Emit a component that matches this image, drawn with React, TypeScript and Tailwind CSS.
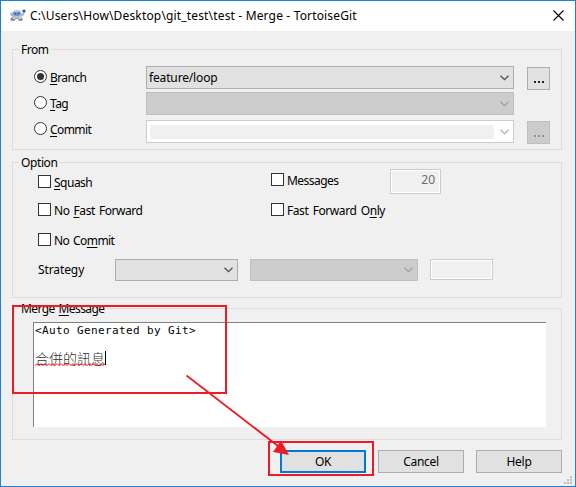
import type { ReactNode } from "react";

function Group({ title, titleClass, className, children }: { title: ReactNode; titleClass: string; className: string; children: ReactNode }) {
  return (
    <section className={`flex w-[550px] flex-col border border-[#dcdcdc] ${className}`}>
      <h2 className={`-mt-[8px] ml-[6px] h-[15px] shrink-0 self-start whitespace-nowrap bg-[#f0f0f0] pl-[2px] font-normal ${titleClass}`}>{title}</h2>
      {children}
    </section>
  );
}

function Key({ children }: { children: string }) {
  return <span className="underline decoration-1 underline-offset-2">{children}</span>;
}

function Radio({ checked, className, children }: { checked?: boolean; className: string; children: ReactNode }) {
  return (
    <label className={`flex h-4 w-[112px] shrink-0 whitespace-nowrap ${className}`}>
      <span className="mt-px mr-[3px] flex size-[13px] shrink-0 items-center justify-center rounded-full border border-[#333] bg-white">
        {checked && <span className="size-[7px] rounded-full bg-[#333]" />}
      </span>
      <span className="mt-px tracking-[-0.6px]">{children}</span>
    </label>
  );
}

function Check({ className, children }: { className: string; children: ReactNode }) {
  return (
    <label className={`flex h-4 shrink-0 whitespace-nowrap ${className}`}>
      <span className="mt-px mr-[3px] size-[13px] shrink-0 border border-[#333] bg-white" />
      <span className="mt-px">{children}</span>
    </label>
  );
}

function Chevron({ color }: { color: string }) {
  return (
    <svg width="9" height="6" viewBox="0 0 9 6" fill="none" stroke={color} strokeWidth="1.3" className="mr-1 shrink-0">
      <path d="M.5 .7 4.5 4.7 8.5 .7" />
    </svg>
  );
}

function Combo({ className, disabled, children }: { className: string; disabled?: boolean; children?: ReactNode }) {
  return (
    <div className={`flex shrink-0 items-center justify-between border ${disabled ? "border-[#bfbfbf] bg-[#ccc]" : "border-[#adadad] bg-[#e1e1e1]"} ${className}`}>
      <span className="pl-[2px] tracking-[-0.15px]">{children}</span>
      <Chevron color={disabled ? "#a0a0a0" : "#505050"} />
    </div>
  );
}

function Browse({ className, disabled }: { className?: string; disabled?: boolean }) {
  return (
    <button className={`ml-[13px] flex h-[23px] w-[23px] shrink-0 items-end justify-center gap-[2px] border pb-[6px] ${disabled ? "border-[#bfbfbf] bg-[#ccc] text-[#929292]" : "border-[#adadad] bg-[#e1e1e1] text-[#202030]"} ${className ?? ""}`}>
      <span className="size-[2px] bg-current" />
      <span className="size-[2px] bg-current" />
      <span className="size-[2px] bg-current" />
    </button>
  );
}

function Tortoise() {
  return (
    <svg width="17" height="15" viewBox="0 0 17 15" className="mt-[6px] ml-2 shrink-0">
      <path d="M1 5.5 4 6l1 4-3-1Z" fill="#a9adb8" />
      <path d="M11 7l3-1 1-3 1 1-1 4-3 2Z" fill="#b2b7c4" />
      <path d="M3 10l3-1 5 0 3 3-1 2h-3l-1-2-2 0-2 2H2l-1-2Z" fill="#9a9ca6" />
      <path d="M4 10.500h2v2H4ZM10 10.500h2v2h-2Z" fill="#e1e1e4" />
      <ellipse cx="7.800" cy="7" rx="4.600" ry="4" fill="#b4c4e6" />
      <path d="M4 5.500Q7.500 1.500 11.500 5v3Q8 10 4 8Z" fill="#7890c4" />
      <path d="M5 4.500Q8 2 10.500 4.500L9 5H6Z" fill="#c0d2f5" />
      <path d="M6 6h1v1.500H6ZM9 6h1v1.500H9Z" fill="#3b5088" />
      <circle cx="15" cy="4" r="1.600" fill="#285b76" />
      <path d="M3 12.500h3M10 12.500h3" stroke="#777b88" />
    </svg>
  );
}

const squiggle = Array.from({ length: 36 }, (_, i) => `${i * 2},${i % 2 ? 0.7 : 2.5}`).join(" ");

export default function App() {
  return (
    <div className="relative flex h-[487px] w-[576px] flex-col overflow-hidden border border-[#1883d7] bg-[#f0f0f0] font-['Noto_Sans','Noto_Sans_CJK_TC',sans-serif] text-[12px] leading-4 text-black">
      <header className="flex h-[30px] shrink-0 bg-white">
        <Tortoise />
        <h1 className="mt-[7px] ml-1 w-[523px] text-[12px] font-normal tracking-[0.16px] whitespace-nowrap">C:\Users\How\Desktop\git_test\test - Merge - TortoiseGit</h1>
        <svg width="11" height="11" viewBox="0 0 11 11" stroke="#000" strokeWidth="1.1" className="mt-[9px] shrink-0">
          <path d="M.5 .5l10 10M10.500 .5l-10 10" />
        </svg>
      </header>

      <main className="flex flex-col pl-[11px]">
        <Group title="From" titleClass="w-[31px] tracking-[-0.5px]" className="mt-[18px] h-[101px]">
          <div className="mt-[9px] flex h-[23px] pl-[21px]">
            <Radio checked className="mt-[3px]"><Key>B</Key>ranch</Radio>
            <Combo className="h-[23px] w-[368px]">feature/loop</Combo>
            <Browse className="mt-px" />
          </div>
          <div className="mt-[3px] flex h-[23px] pl-[21px]">
            <Radio className="mt-[3px]"><Key>T</Key>ag</Radio>
            <Combo disabled className="h-[23px] w-[368px]" />
          </div>
          <div className="mt-[5px] flex h-[23px] pl-[21px]">
            <Radio className="mt-px"><Key>C</Key>ommit</Radio>
            <div className="flex h-[23px] w-[368px] shrink-0 items-center justify-between border border-[#ccc] bg-white pl-[3px]">
              <span className="h-[14px] w-[344px] bg-[#f0f0f0]" />
              <Chevron color="#b0b0b0" />
            </div>
            <Browse disabled className="mt-px" />
          </div>
        </Group>

        <Group title="Option" titleClass="w-[41px] tracking-[-0.4px]" className="mt-3 h-[136px]">
          <div className="flex h-[89px] shrink-0 pl-[25px]">
            <div className="flex w-[233px] flex-col pt-1">
              <Check className="tracking-[-0.5px]"><Key>S</Key>quash</Check>
              <Check className="mt-3 tracking-[-0.45px] [word-spacing:1.4px]">No <Key>F</Key>ast Forward</Check>
              <Check className="mt-[14px] tracking-[-0.6px] [word-spacing:1.4px]">No Co<Key>m</Key>mit</Check>
            </div>
            <div className="flex flex-col">
              <div className="-mt-px flex h-[25px]">
                <Check className="mt-[3px] w-[119px] tracking-[-0.55px]">Messages</Check>
                <div className="h-[25px] w-[51px] border border-[#ccc] bg-[#f0f0f0] pt-[2px] pr-[5px] text-right text-[#6d6d6d] ring-1 ring-white ring-inset">20</div>
              </div>
              <Check className="mt-2 tracking-[-0.42px] [word-spacing:1.6px]">Fast Forward O<Key>n</Key>ly</Check>
            </div>
          </div>
          <div className="flex pl-[25px]">
            <span className="mt-[3px] w-[77px] shrink-0 tracking-[-0.1px]">Strategy</span>
            <Combo className="h-[22px] w-[123px]" />
            <Combo disabled className="ml-3 h-[22px] w-[168px]" />
            <div className="ml-3 h-[21px] w-[63px] border border-[#ccc] ring-1 ring-white ring-inset" />
          </div>
        </Group>

        <Group title={<span>Merge <Key>M</Key>essage</span>} titleClass="w-[88px] tracking-[-0.6px] [word-spacing:1.4px]" className="mt-[10px] h-[132px]">
          <div className="mt-[6px] ml-5 flex h-[105px] w-[513px] flex-col border-t border-l border-[#828282] bg-white pl-px">
            <p className="h-[28px] whitespace-pre font-['DejaVu_Sans_Mono',monospace] text-[11px] tracking-[0.378px]">{"<Auto Generated by Git>"}</p>
            <div className="flex h-4">
              <span className="relative -mt-[1px] h-4 font-['Noto_Sans_CJK_TC',sans-serif] text-[14px] font-light text-[#333]">
                合併的訊息
                <svg width="70" height="3" viewBox="0 0 70 3" fill="none" stroke="#f00" strokeWidth="0.9" className="absolute top-[13px] left-0">
                  <polyline points={squiggle} />
                </svg>
              </span>
              <span className="h-[14px] w-px bg-black" />
            </div>
          </div>
        </Group>
      </main>

      <footer className="mt-[10px] flex gap-3 pl-[279px]">
        <button className="h-[23px] w-[86px] border-2 border-[#0078d7] bg-[#e1e1e1] tracking-[-0.3px]">OK</button>
        <button className="h-[23px] w-[86px] border border-[#adadad] bg-[#e1e1e1] tracking-[-0.3px]">Cancel</button>
        <button className="h-[23px] w-[86px] border border-[#adadad] bg-[#e1e1e1] tracking-[-0.3px]">Help</button>
      </footer>

      <svg width="8" height="8" viewBox="0 0 8 8" fill="#bfbfbf" className="absolute top-[475px] left-[563px]">
        <path d="M6 0h2v2H6ZM3 3h2v2H3ZM6 3h2v2H6ZM0 6h2v2H0ZM3 6h2v2H3ZM6 6h2v2H6Z" />
      </svg>
      <div className="absolute top-[304px] left-[11px] h-[89px] w-[215px] border-2 border-[#ed1c24]" />
      <div className="absolute top-[440px] left-[267px] h-[35px] w-[106px] border-2 border-[#ed1c24]" />
      <svg width="108" height="84" viewBox="0 0 108 84" className="absolute top-[373px] left-[183px]">
        <path d="M2.500 1.500 94 72" stroke="#ed1c24" strokeWidth="1.800" />
        <path d="M97 66.500 105 81 89 78Z" fill="#ed1c24" />
      </svg>
    </div>
  );
}
